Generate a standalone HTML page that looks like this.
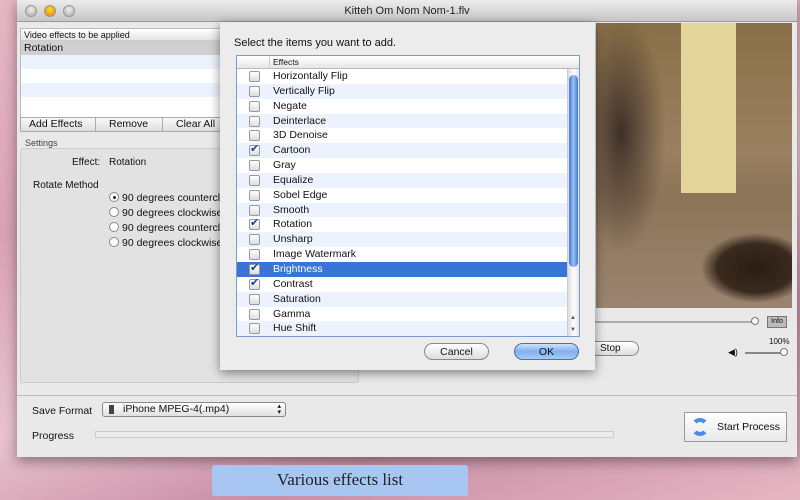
<!DOCTYPE html>
<html><head><meta charset="utf-8"><style>
*{box-sizing:border-box;margin:0;padding:0}
body{width:800px;height:500px;overflow:hidden;position:relative;font-family:"Liberation Sans",sans-serif;font-size:10px;color:#111;
background:linear-gradient(160deg,#e7b7c6 0%,#d9a2b4 30%,#e9c3cf 55%,#c98fa5 75%,#e5b6c4 100%)}
.a{position:absolute}
.win{left:17px;top:0;width:780px;height:457px;background:#e9e9e9;box-shadow:0 4px 12px rgba(0,0,0,.4)}
.title{left:0;top:0;width:780px;height:22px;background:linear-gradient(#ececec,#c6c6c6);border-bottom:1px solid #999;text-align:center;font-size:11px;line-height:22px;color:#222}
.dot{top:5px;width:12px;height:12px;border-radius:50%;background:radial-gradient(circle at 50% 35%,#eee,#aaa);border:1px solid #999}
.row{height:14.85px;line-height:14px;font-size:10.5px}
.cb{position:absolute;left:12px;width:11px;height:11px;border:1px solid #999;border-radius:2px;background:linear-gradient(#fff,#ddd);top:2px}
.cb.on::after{content:"✔";position:absolute;left:0;top:-4px;font-size:11px;color:#1a3f9a}
.btn{border:1px solid #888;border-radius:10px;background:linear-gradient(#fff,#ddd);text-align:center;font-size:10px;line-height:16px}
.radio{display:inline-block;width:10px;height:10px;border:1px solid #888;border-radius:50%;background:#fff;vertical-align:-1px;margin-right:3px;position:relative}
</style></head><body>
<div class="a win">
 <div class="a title">Kitteh Om Nom Nom-1.flv</div>
 <div class="a dot" style="left:8px"></div>
 <div class="a dot" style="left:27px;background:radial-gradient(circle at 50% 35%,#fd3,#e70)"></div>
 <div class="a dot" style="left:46px"></div>
 <div class="a" style="left:3px;top:28px;width:210px;height:90px;background:#fff;border:1px solid #bbb">
  <div style="height:12px;line-height:12px;font-size:9px;padding-left:3px;background:linear-gradient(#fff,#e4e4e4);border-bottom:1px solid #ccc">Video effects to be applied</div>
  <div style="height:14px;line-height:14px;padding-left:3px;background:#d0d0d0;font-size:10.5px">Rotation</div>
  <div style="height:14px;background:#edf3fe"></div><div style="height:14px"></div><div style="height:14px;background:#edf3fe"></div>
 </div>
 <div class="a" style="left:3px;top:117px;width:210px;height:15px;background:linear-gradient(#fafafa,#ddd);border:1px solid #aaa;font-size:10.5px;line-height:13px">
  <span class="a" style="left:8px">Add Effects</span><span class="a" style="left:74px;top:0;height:13px;border-left:1px solid #aaa"></span>
  <span class="a" style="left:88px">Remove</span><span class="a" style="left:141px;top:0;height:13px;border-left:1px solid #aaa"></span>
  <span class="a" style="left:155px">Clear All</span></div>
 <div class="a" style="left:8px;top:138px;font-size:9px;color:#444">Settings</div>
 <div class="a" style="left:3px;top:148px;width:339px;height:235px;background:#e2e2e2;border:1px solid #ccc;border-radius:3px"></div>
 <div class="a" style="left:55px;top:157px">Effect:</div><div class="a" style="left:92px;top:157px">Rotation</div>
 <div class="a" style="left:16px;top:180px">Rotate Method</div>
 <div class="a" style="left:92px;top:191px;line-height:15px;font-size:10.5px">
  <div><span class="radio"><span class="a" style="left:3px;top:3px;width:3px;height:3px;border-radius:50%;background:#222"></span></span>90 degrees countercl</div>
  <div><span class="radio"></span>90 degrees clockwise</div>
  <div><span class="radio"></span>90 degrees countercl</div>
  <div><span class="radio"></span>90 degrees clockwise</div></div>
 <div class="a" style="left:579px;top:23px;width:196px;height:285px;background:
  radial-gradient(ellipse 55px 35px at 160px 245px,#2a1d14 0,#3a2a1e 70%,transparent 100%),
  radial-gradient(ellipse 45px 120px at 25px 110px,#3e3028,transparent),
  linear-gradient(90deg,transparent 85px,#e2d49a 85px,#e2d49a 140px,transparent 140px) 0 0/100% 170px no-repeat,
  linear-gradient(#8a7048,#9a8060 45%,#8c7458 60%,#9a8470)"></div>
 <div class="a" style="left:575px;top:321px;width:165px;height:2px;background:#aaa"></div>
 <div class="a" style="left:734px;top:317px;width:8px;height:8px;border-radius:50%;border:1px solid #777;background:#fff"></div>
 <div class="a" style="left:750px;top:316px;width:20px;height:12px;border:1px solid #777;background:#bbb;font-size:7px;text-align:center;line-height:10px">Info</div>
 <div class="a" style="left:752px;top:337px;font-size:8px">100%</div>
 <div class="a" style="left:711px;top:347px;font-size:9px">◀)</div>
 <div class="a" style="left:728px;top:352px;width:40px;height:2px;background:#888"></div>
 <div class="a" style="left:763px;top:348px;width:8px;height:8px;border-radius:50%;border:1px solid #777;background:#fff"></div>
 <div class="a btn" style="left:570px;top:341px;width:52px;height:15px;line-height:13px;text-align:left;padding-left:12px">Stop</div>
 <div class="a" style="left:0;top:395px;width:780px;border-top:1px solid #bbb"></div>
 <div class="a" style="left:15px;top:405px;font-size:10.5px">Save Format</div>
 <div class="a" style="left:85px;top:402px;width:184px;height:15px;border:1px solid #888;border-radius:3px;background:linear-gradient(#fff,#e0e0e0);line-height:13px;padding-left:20px;font-size:10.5px">iPhone MPEG-4(.mp4)
  <span class="a" style="left:6px;top:2px;width:5px;height:9px;background:#444"></span><span class="a" style="right:4px;font-size:7px;line-height:6px;top:1px">▴<br>▾</span></div>
 <div class="a" style="left:15px;top:430px;font-size:10.5px">Progress</div>
 <div class="a" style="left:78px;top:431px;width:519px;height:7px;border:1px solid #ccc;background:#ececec"></div>
 <div class="a" style="left:667px;top:412px;width:103px;height:30px;border:1px solid #999;background:linear-gradient(#fff,#e8e8e8);line-height:28px;padding-left:32px;font-size:10.5px">Start Process
  <span class="a" style="left:6px;top:5px;width:18px;height:18px;border-radius:50%;border:4px solid #4a8ee0;border-left-color:transparent;border-right-color:transparent"></span></div>
</div>
<div class="a" style="left:220px;top:22px;width:375px;height:348px;background:#ececec;box-shadow:0 3px 10px rgba(0,0,0,.45)">
 <div class="a" style="left:14px;top:15px;font-size:11px">Select the items you want to add.</div>
 <div class="a" style="left:16px;top:33px;width:344px;height:282px;border:1px solid #7b9bd0;background:#fff;overflow:hidden">
  <div style="height:13px;line-height:12px;background:linear-gradient(#fff,#e6e6e6);border-bottom:1px solid #bbb;font-size:8.5px;padding-left:36px;position:relative">Effects<span class="a" style="left:32px;top:0;height:13px;border-left:1px solid #ccc"></span></div>
  <div>
   <div class="row" style="position:relative;padding-left:36px">Horizontally Flip<span class="cb"></span></div>
   <div class="row" style="position:relative;padding-left:36px;background:#edf3fe">Vertically Flip<span class="cb"></span></div>
   <div class="row" style="position:relative;padding-left:36px">Negate<span class="cb"></span></div>
   <div class="row" style="position:relative;padding-left:36px;background:#edf3fe">Deinterlace<span class="cb"></span></div>
   <div class="row" style="position:relative;padding-left:36px">3D Denoise<span class="cb"></span></div>
   <div class="row" style="position:relative;padding-left:36px;background:#edf3fe">Cartoon<span class="cb on"></span></div>
   <div class="row" style="position:relative;padding-left:36px">Gray<span class="cb"></span></div>
   <div class="row" style="position:relative;padding-left:36px;background:#edf3fe">Equalize<span class="cb"></span></div>
   <div class="row" style="position:relative;padding-left:36px">Sobel Edge<span class="cb"></span></div>
   <div class="row" style="position:relative;padding-left:36px;background:#edf3fe">Smooth<span class="cb"></span></div>
   <div class="row" style="position:relative;padding-left:36px">Rotation<span class="cb on"></span></div>
   <div class="row" style="position:relative;padding-left:36px;background:#edf3fe">Unsharp<span class="cb"></span></div>
   <div class="row" style="position:relative;padding-left:36px">Image Watermark<span class="cb"></span></div>
   <div class="row" style="position:relative;padding-left:36px;background:#3875d7;color:#fff">Brightness<span class="cb on"></span></div>
   <div class="row" style="position:relative;padding-left:36px">Contrast<span class="cb on"></span></div>
   <div class="row" style="position:relative;padding-left:36px;background:#edf3fe">Saturation<span class="cb"></span></div>
   <div class="row" style="position:relative;padding-left:36px">Gamma<span class="cb"></span></div>
   <div class="row" style="position:relative;padding-left:36px;background:#edf3fe">Hue Shift<span class="cb"></span></div>
  </div>
  <div class="a" style="left:330px;top:13px;width:13px;height:269px;background:linear-gradient(90deg,#ddd,#fff,#ddd);border-left:1px solid #ccc"></div>
  <div class="a" style="left:332px;top:19px;width:9px;height:192px;border-radius:5px;background:linear-gradient(90deg,#3d78d8,#9cc0f3,#3d78d8)"></div>
  <div class="a" style="left:333px;top:256px;font-size:6px;line-height:12px;color:#555">▲<br>▼</div>
 </div>
 <div class="a btn" style="left:204px;top:321px;width:65px;height:17px;font-size:10.5px">Cancel</div>
 <div class="a btn" style="left:294px;top:321px;width:65px;height:17px;font-size:10.5px;border-color:#4a6fb0;background:linear-gradient(#cfe2fb,#7fb0ee 50%,#a9cbf5)">OK</div>
</div>
<div class="a" style="left:212px;top:465px;width:256px;height:31px;background:#a8c6f2;border-radius:3px;text-align:center;line-height:30px;font-family:'Liberation Serif',serif;font-size:17px;color:#222">Various effects list</div>
</body></html>
